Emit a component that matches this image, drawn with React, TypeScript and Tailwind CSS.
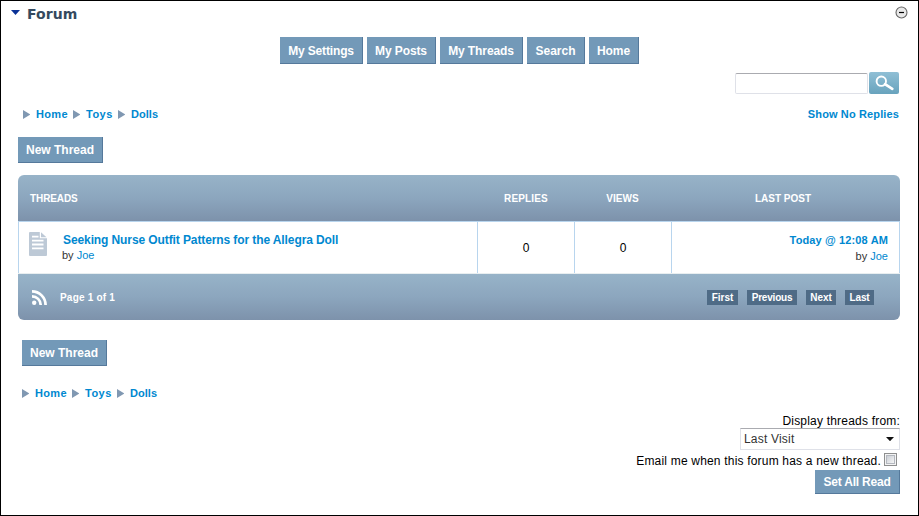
import React from "react";

const linkColor = "text-[#0088d0]";

function Button({ label, className }: { label: string; className: string }) {
  return (
    <button
      className={`flex items-center justify-center whitespace-nowrap border-b border-r border-[#55799b] bg-[#7399b8] text-[12px] font-bold leading-none text-white ${className}`}
    >
      {label}
    </button>
  );
}

function Crumb({ label, className }: { label: string; className: string }) {
  return (
    <span className={`flex h-[14px] items-center ${className}`}>
      <svg className="mr-[6px] h-[9px] w-[7px] shrink-0" viewBox="0 0 7 9">
        <path d="M0 0L7.4 4.5L0 9Z" fill="#8098b2" />
      </svg>
      <a className={`whitespace-nowrap text-[11px] font-bold leading-[14px] ${linkColor}`}>{label}</a>
    </span>
  );
}

function Breadcrumbs() {
  return (
    <nav className="flex">
      <Crumb label="Home" className="w-[50px] tracking-[0.35px]" />
      <Crumb label="Toys" className="w-[45px] tracking-[0.5px]" />
      <Crumb label="Dolls" className="w-[45px] tracking-[0.05px]" />
    </nav>
  );
}

function PageButton({ label, className }: { label: string; className: string }) {
  return (
    <a
      className={`flex h-[15px] items-center justify-center whitespace-nowrap bg-[#4f6b86] pt-[2px] text-[10px] font-bold leading-none text-white ${className}`}
    >
      {label}
    </a>
  );
}

export default function App() {
  return (
    <div className="h-[516px] w-[919px] overflow-hidden border border-black bg-white font-['Liberation_Sans',Arial,sans-serif] text-[12px] text-black">
      <header className="flex h-[36px] items-start justify-between pl-[10px] pr-[10px]">
        <div className="flex items-start">
          <svg className="mt-[9px] h-[5px] w-[9px]" viewBox="0 0 9 5">
            <path d="M0 0H9L4.5 5Z" fill="#0a3296" />
          </svg>
          <h1 className="ml-[7px] mt-[4px] font-['DejaVu_Sans',sans-serif] text-[14px] font-bold leading-[18px] tracking-[0.05px] text-[#34495e]">
            Forum
          </h1>
        </div>
        <svg className="mt-[5px] h-[13px] w-[13px]" viewBox="0 0 13 13">
          <circle cx="6.5" cy="6.5" r="5.5" fill="#e8e8e8" stroke="#666" strokeWidth="1.1" />
          <path d="M4 6.5H9" stroke="#000" strokeWidth="1.2" />
        </svg>
      </header>

      <nav className="ml-[279px] flex h-[27px] gap-1">
        <Button label="My Settings" className="w-[83px] pt-[2px] tracking-[-0.15px]" />
        <Button label="My Posts" className="w-[69px] pt-[2px] tracking-[-0.1px]" />
        <Button label="My Threads" className="w-[83px] pt-[2px] tracking-[-0.1px]" />
        <Button label="Search" className="w-[58px] pt-[2px]" />
        <Button label="Home" className="w-[50px] pt-[2px] tracking-[-0.1px]" />
      </nav>

      <div className="mr-[19px] mt-2 flex h-[22px] items-end justify-end gap-px">
        <input className="h-[21px] w-[133px] rounded-[2px] border border-[#dfe1e8] border-t-[#aaabb0] bg-white px-1 outline-none" />
        <button className="flex h-[22px] w-[30px] items-center justify-center rounded-[2px] bg-linear-to-b from-[#90bfd5] to-[#68a3bd]">
          <svg className="h-[22px] w-[30px]" viewBox="0 0 30 22" fill="none" stroke="#fff">
            <circle cx="12.3" cy="9.2" r="4.7" strokeWidth="1.9" />
            <path d="M16 12.2L23.3 16.8" strokeWidth="2.7" strokeLinecap="round" />
          </svg>
        </button>
      </div>

      <div className="mt-[13px] flex h-[14px] justify-between pl-[22px] pr-[19px]">
        <Breadcrumbs />
        <a className={`text-[11px] font-bold leading-[14px] tracking-[0.13px] ${linkColor}`}>Show No Replies</a>
      </div>

      <Button label="New Thread" className="ml-[17px] mt-[16px] h-[26px] w-[85px]" />

      <section className="ml-[17px] mt-[12px] w-[882px]">
        <div className="grid h-[46px] grid-cols-[459px_97px_97px_229px] items-center rounded-t-[6px] bg-linear-to-b from-[#97b3c8] via-[#8ca6be] to-[#7d92ab] pt-[2px] text-center text-[10px] font-bold leading-[14px] text-white">
          <span className="pl-[12px] text-left tracking-[-0.1px]">THREADS</span>
          <span className="pl-px tracking-[0.15px]">REPLIES</span>
          <span className="tracking-[0.1px]">VIEWS</span>
          <span className="pr-[5px]">LAST POST</span>
        </div>
        <div className="grid h-[52px] grid-cols-[460px_97px_97px_228px] border-t border-[#b8d5ee]">
          <div className="flex border-x border-[#b8d5ee] pl-[10px]">
            <svg className="mt-[10px] h-[24px] w-[18px]" viewBox="0 0 18 24">
              <path d="M1 0H10.8V6.2H18V23Q18 24 17 24H1Q0 24 0 23V1Q0 0 1 0Z" fill="#bdc9d6" />
              <path d="M12 0.3L17.5 5.3H12Z" fill="#bdc9d6" />
              <path d="M3 4.7H9.5M3 8.6H14.5M3 12.5H14.5M3 16.4H14.5" stroke="#fff" strokeWidth="1.8" />
            </svg>
            <div className="ml-[15px] pt-[10px]">
              <a className={`block whitespace-nowrap pl-px text-[12px] font-bold leading-[16px] tracking-[-0.1px] ${linkColor}`}>
                Seeking Nurse Outfit Patterns for the Allegra Doll
              </a>
              <p className="text-[11px] leading-[15px] text-[#333]">
                by <a className={linkColor}>Joe</a>
              </p>
            </div>
          </div>
          <div className="flex items-center justify-center border-r border-[#b8d5ee]">0</div>
          <div className="flex items-center justify-center border-r border-[#b8d5ee]">0</div>
          <div className="border-r border-[#b8d5ee] pr-[11px] pt-[11px] text-right">
            <a className={`block text-[11px] font-bold leading-[15px] tracking-[0.13px] ${linkColor}`}>Today @ 12:08 AM</a>
            <p className="text-[11px] leading-[16px] text-[#333]">
              by <a className={linkColor}>Joe</a>
            </p>
          </div>
        </div>
        <div className="flex h-[47px] items-center rounded-b-[6px] border-t border-[#e8eef0] bg-linear-to-b from-[#97b3c8] via-[#8ca6be] to-[#7d92ab] pl-[14px] pr-[26px]">
          <svg className="h-[15px] w-[15px]" viewBox="0 0 15 15" fill="none" stroke="#fff">
            <circle cx="2.2" cy="12.8" r="2.2" fill="#fff" stroke="none" />
            <path d="M0 6.3A8.7 8.7 0 0 1 8.7 15M0 1.4A13.6 13.6 0 0 1 13.6 15" strokeWidth="2.7" />
          </svg>
          <span className="ml-[13px] pt-[2px] text-[10px] font-bold leading-[14px] tracking-[0.2px] text-white">Page 1 of 1</span>
          <div className="ml-auto flex gap-[9px]">
            <PageButton label="First" className="w-[31px]" />
            <PageButton label="Previous" className="w-[50px] tracking-[-0.2px]" />
            <PageButton label="Next" className="w-[30px] tracking-[-0.1px]" />
            <PageButton label="Last" className="w-[29px] tracking-[-0.1px]" />
          </div>
        </div>
      </section>

      <Button label="New Thread" className="ml-[21px] mt-[20px] h-[26px] w-[85px]" />
      <div className="ml-[21px] mt-[20px]">
        <Breadcrumbs />
      </div>

      <div className="mr-[18px] mt-[13px] flex flex-col items-end">
        <label className="h-[15px] leading-[16px] tracking-[0.2px]">Display threads from:</label>
        <button className="flex h-[22px] w-[160px] items-center justify-between border border-[#dfe1e8] border-t-[#aaabb0] bg-white pl-[3px] pr-[5px] tracking-[0.2px] text-[#333]">
          <span>Last Visit</span>
          <svg className="h-[4px] w-[8px]" viewBox="0 0 8 4">
            <path d="M0 0H8L4 4.2Z" fill="#111" />
          </svg>
        </button>
        <label className="flex h-[20px] items-start pr-[3px]">
          <span className="mt-[3px] leading-[16px] tracking-[0.19px]">Email me when this forum has a new thread.</span>
          <span className="ml-[3px] mt-[3px] h-[13px] w-[13px] border border-[#8e8f8f] bg-[#f4f4f4] p-px">
            <span className="block h-[9px] w-[9px] border border-[#b4b8bf] bg-linear-to-br from-[#cbcfd5] to-[#f6f6f6]" />
          </span>
        </label>
        <Button label="Set All Read" className="h-[24px] w-[85px] tracking-[-0.2px]" />
      </div>
    </div>
  );
}
